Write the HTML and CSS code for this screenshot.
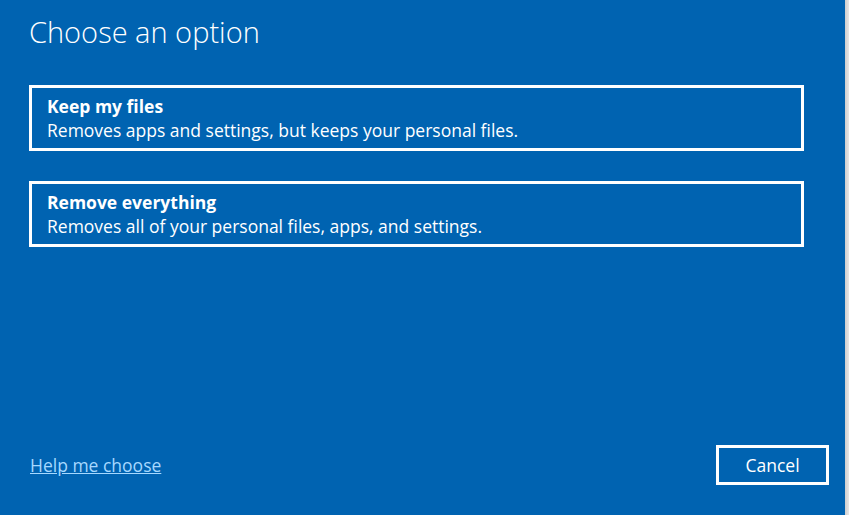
FILE: index.html
```html
<!DOCTYPE html>
<html lang="en">
<head>
    <meta charset="UTF-8">
    <title>Choose an option</title>
    <link rel="stylesheet" href="styles.css">
</head>
<body>
    <div class="window">
        <main class="panel">
            <h1 class="panel-title">Choose an option</h1>

            <div class="option-list">
                <div class="option-card">
                    <div class="option-name">Keep my files</div>
                    <div class="option-desc">Removes apps and settings, but keeps your personal files.</div>
                </div>
                <div class="option-card">
                    <div class="option-name">Remove everything</div>
                    <div class="option-desc">Removes all of your personal files, apps, and settings.</div>
                </div>
            </div>

            <footer class="panel-footer">
                <a class="help-link" href="#">Help me choose</a>
                <button class="cancel-button">Cancel</button>
            </footer>
        </main>
        <div class="edge"></div>
    </div>
</body>
</html>
```

FILE: styles.css
```css
html, body {
    margin: 0;
    padding: 0;
    height: 100%;
}
body {
    font-family: "Open Sans", "Noto Sans", "Liberation Sans", sans-serif;
    background-color: #0063b1;
    color: #fff;
    overflow: hidden;
}
.window {
    display: flex;
    height: 100%;
}
.panel {
    flex: 1;
    display: flex;
    flex-direction: column;
    padding: 0 16px 30px 29px;
    background-color: #0063b1;
}
.panel-title {
    margin: 12px 0 0 0;
    font-size: 29px;
    font-weight: 300;
    line-height: 40px;
}
.option-list {
    display: flex;
    flex-direction: column;
    gap: 30px;
    margin-top: 33px;
    margin-right: 25px;
}
.option-card {
    border: 3px solid #fff;
    padding: 6px 15px;
    height: 48px;
    cursor: pointer;
}
.option-name {
    font-size: 17.5px;
    font-weight: 700;
    line-height: 24px;
}
.option-desc {
    font-size: 17.5px;
    line-height: 24px;
}
.panel-footer {
    margin-top: auto;
    display: flex;
    justify-content: space-between;
    align-items: center;
}
.help-link {
    margin-left: 1px;
    color: #a6d8ff;
    font-size: 17.5px;
    text-decoration: underline;
}
.cancel-button {
    width: 113px;
    height: 40px;
    background: transparent;
    border: 3px solid #fff;
    color: #fff;
    font-family: inherit;
    font-size: 17.5px;
    cursor: pointer;
}
.edge {
    width: 4px;
    background: linear-gradient(to right, #cfcfcf, #e6e6e6);
}
```
